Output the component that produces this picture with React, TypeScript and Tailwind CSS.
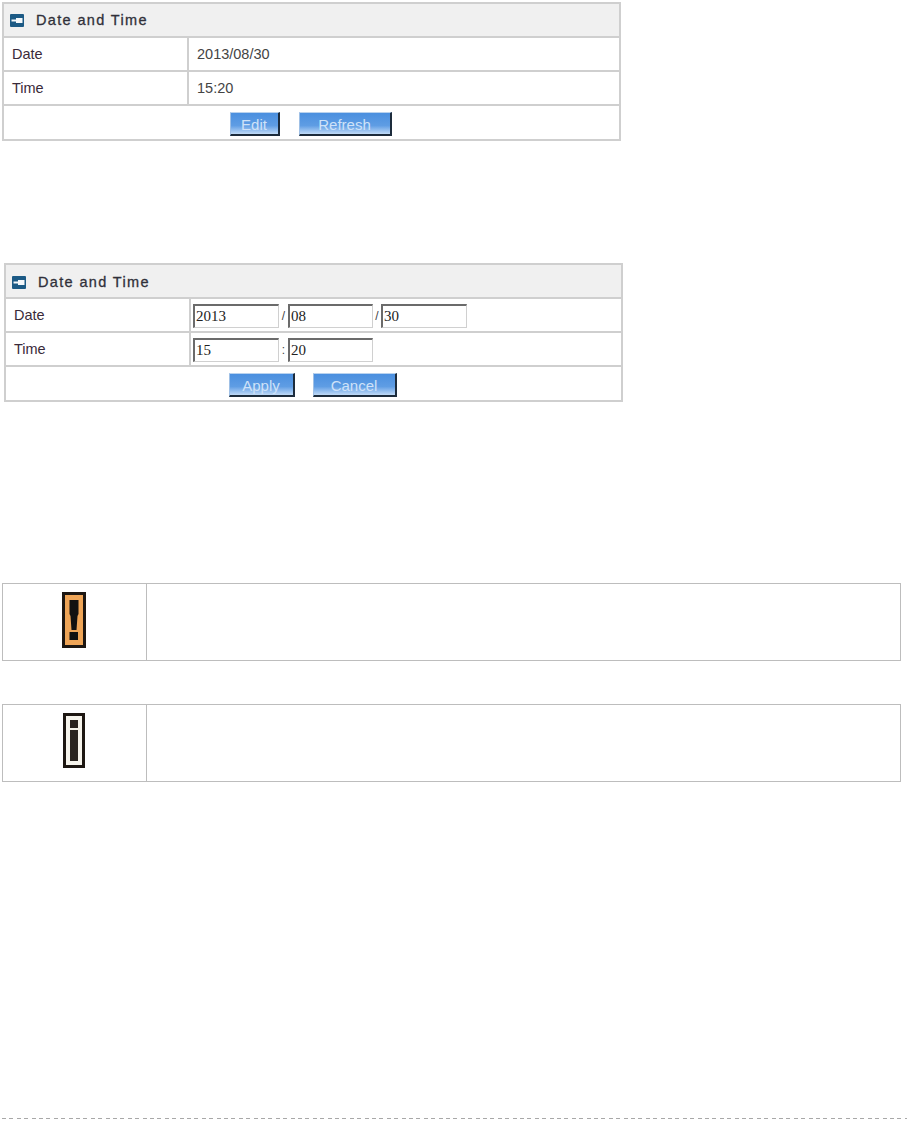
const sans = "font-['Liberation_Sans',Arial,sans-serif]";

function Arrow() {
  return (
    <svg width="14" height="13" viewBox="0 0 14 13" className="shrink-0">
      <rect width="14" height="13" rx="1" fill="#1c5a85" />
      <path d="M1.5 5.5H6V4h6.5v5H6V7.5H1.5z" fill="#f4f8fb" />
    </svg>
  );
}

function Btn({ label, w }: { label: string; w: string }) {
  return (
    <div
      className={`${w} h-[24px] flex items-center justify-center pt-[2px] border-t border-l border-t-[#b9d2ee] border-l-[#9fc0e6] border-r-2 border-b-2 border-r-[#1d2c3c] border-b-[#1d2c3c] bg-gradient-to-b from-[#4a8fdf] via-[#5f9de4] via-60% to-[#c0daf6] text-[15px] leading-none text-[#cfe2f8]`}
    >
      {label}
    </div>
  );
}

function Field({ value, w }: { value: string; w: string }) {
  return (
    <div
      className={`${w} h-[24px] flex items-center border-t-2 border-l-2 border-t-[#6b6b6b] border-l-[#6b6b6b] border-r border-b border-r-[#d0d0d0] border-b-[#d0d0d0] pl-px bg-white text-[15px] text-[#222] font-['Liberation_Serif',serif]`}
    >
      {value}
    </div>
  );
}

function Panel({
  className,
  headerPad,
  rows,
  buttons,
}: {
  className: string;
  headerPad: string;
  rows: { label: string; value: React.ReactNode }[];
  buttons: React.ReactNode;
}) {
  return (
    <div className={`${className} w-[619px] h-[139px] border-2 border-[#cfcfcf] flex flex-col ${sans} bg-white`}>
      <div className={`${headerPad} h-[32px] shrink-0 bg-[#f0f0f0] flex items-center gap-[12px] pl-[6px] text-[14.5px] tracking-[1.35px] text-[#30303a]`}>
        <Arrow />
        <span className="[-webkit-text-stroke:0.3px_#30303a]">Date and Time</span>
      </div>
      {rows.map((r) => (
        <div key={r.label} className="h-[34px] shrink-0 border-t-2 border-[#cfcfcf] flex items-center text-[14.5px]">
          <div className="w-[185px] h-full flex items-center pl-[8px] pt-[2px] border-r-2 border-[#cfcfcf] text-[#3a2a3a]">{r.label}</div>
          <div className="flex items-center pl-[8px] pt-[2px] text-[#444]">{r.value}</div>
        </div>
      ))}
      <div className="flex-1 pt-[2px] border-t-2 border-[#cfcfcf] flex items-center justify-center">{buttons}</div>
    </div>
  );
}

function Note({ className, children }: { className: string; children: React.ReactNode }) {
  return (
    <div className={`${className} mx-[2px] w-[899px] h-[78px] border border-[#bdbdbd] flex`}>
      <div className="w-[144px] border-r border-[#bdbdbd] flex items-center justify-center">{children}</div>
    </div>
  );
}

export default function App() {
  return (
    <div className="w-[908px] h-[1121px] bg-white flex flex-col overflow-hidden">
      <Panel
        className="ml-[2px] mt-[2px]"
        headerPad="pt-px"
        rows={[
          { label: "Date", value: "2013/08/30" },
          { label: "Time", value: "15:20" },
        ]}
        buttons={
          <div className="flex gap-[19px] mr-[2px]">
            <Btn label="Edit" w="w-[50px]" />
            <Btn label="Refresh" w="w-[93px]" />
          </div>
        }
      />
      <Panel
        className="ml-[4px] mt-[122px]"
        headerPad="pt-[3px]"
        rows={[
          {
            label: "Date",
            value: (
              <div className="flex items-center -ml-[6px]">
                <Field value="2013" w="w-[86px]" />
                <span className="w-[9px] text-center text-[12px]">/</span>
                <Field value="08" w="w-[85px]" />
                <span className="w-[8px] text-center text-[12px]">/</span>
                <Field value="30" w="w-[86px]" />
              </div>
            ),
          },
          {
            label: "Time",
            value: (
              <div className="flex items-center -ml-[6px]">
                <Field value="15" w="w-[86px]" />
                <span className="w-[9px] text-center text-[12px]">:</span>
                <Field value="20" w="w-[85px]" />
              </div>
            ),
          },
        ]}
        buttons={
          <div className="flex gap-[18px] mr-[2px]">
            <Btn label="Apply" w="w-[66px]" />
            <Btn label="Cancel" w="w-[84px]" />
          </div>
        }
      />
      <Note className="mt-[181px]">
        <svg width="24" height="56" viewBox="0 0 24 56" className="mb-[4px] mr-[2px]">
          <rect x="1.5" y="1.5" width="21" height="53" fill="#efa557" stroke="#1d1712" strokeWidth="3" />
          <path d="M7.5 8h9v14l-1 2-1 14h-5l-1-14-1-2z" fill="#111" />
          <rect x="7.5" y="40" width="8.5" height="8" fill="#111" />
        </svg>
      </Note>
      <Note className="mt-[43px]">
        <svg width="22" height="55" viewBox="0 0 22 55" className="mb-[5px] mr-[2px]">
          <rect x="1.5" y="1.5" width="19" height="52" fill="#f6f4ec" stroke="#1d1712" strokeWidth="3" />
          <rect x="7" y="7" width="8" height="8" fill="#2a2420" />
          <rect x="7" y="17" width="8" height="31" fill="#2a2420" />
        </svg>
      </Note>
      <div className="mt-[336px] ml-[2px] w-[905px] h-px bg-[repeating-linear-gradient(90deg,#a8a8a8_0_4px,transparent_4px_7.4px)]" />
    </div>
  );
}
